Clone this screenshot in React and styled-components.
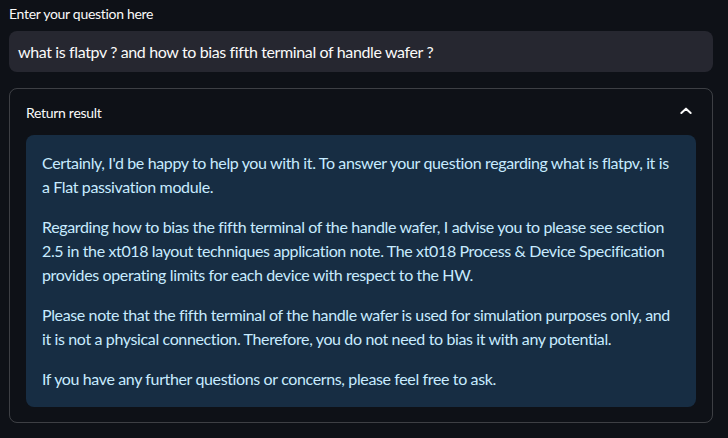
import styled, { createGlobalStyle } from "styled-components";

const GlobalStyle = createGlobalStyle`
  html, body {
    margin: 0;
    padding: 0;
    background: #0e1117;
  }
  body {
    font-family: "Source Sans Pro", Lato, "Noto Sans", sans-serif;
    color: #fafafa;
  }
`;

const Page = styled.div`
  width: 728px;
  height: 438px;
  box-sizing: border-box;
  padding: 4px 15px 0 9px;
  display: flex;
  flex-direction: column;
  overflow: hidden;
`;

const Label = styled.label`
  font-size: 14px;
  letter-spacing: -0.3px;
  line-height: 20px;
  height: 20px;
  margin-bottom: 7px;
`;

const Input = styled.div`
  height: 41px;
  background: #262730;
  border-radius: 8px;
  display: flex;
  align-items: center;
  padding: 0 9px;
  font-size: 16px;
  letter-spacing: -0.37px;
  margin-bottom: 16px;
`;

const Expander = styled.details`
  border: 1px solid rgba(250, 250, 250, 0.2);
  border-radius: 8px;
  padding: 0 16px 15px 16px;
`;

const Summary = styled.summary`
  list-style: none;
  display: flex;
  align-items: center;
  justify-content: space-between;
  height: 46px;
  font-size: 14px;
  letter-spacing: -0.3px;
  cursor: pointer;

  &::-webkit-details-marker {
    display: none;
  }
`;

const Chevron = styled.svg`
  width: 16px;
  height: 16px;
  margin-right: 2px;
  margin-top: -2px;
`;

const InfoBox = styled.div`
  background: #172d43;
  color: rgb(199, 235, 255);
  border-radius: 8px;
  padding: 16px;
  font-size: 16px;
  letter-spacing: -0.37px;
  line-height: 24px;

  p {
    margin: 0 0 16px 0;
  }
  p:last-child {
    margin-bottom: 0;
  }
`;

const paragraphs = [
  "Certainly, I'd be happy to help you with it. To answer your question regarding what is flatpv, it is a Flat passivation module.",
  "Regarding how to bias the fifth terminal of the handle wafer, I advise you to please see section 2.5 in the xt018 layout techniques application note. The xt018 Process & Device Specification provides operating limits for each device with respect to the HW.",
  "Please note that the fifth terminal of the handle wafer is used for simulation purposes only, and it is not a physical connection. Therefore, you do not need to bias it with any potential.",
  "If you have any further questions or concerns, please feel free to ask.",
];

export default function App() {
  return (
    <>
      <GlobalStyle />
      <Page>
        <Label>Enter your question here</Label>
        <Input>what is flatpv ? and how to bias fifth terminal of handle wafer ?</Input>
        <Expander open>
          <Summary>
            <span>Return result</span>
            <Chevron viewBox="0 0 24 24" fill="none" stroke="#fafafa" strokeWidth="3" strokeLinecap="round" strokeLinejoin="round">
              <polyline points="5 15 12 8.5 19 15" />
            </Chevron>
          </Summary>
          <InfoBox>
            {paragraphs.map((text, i) => (
              <p key={i}>{text}</p>
            ))}
          </InfoBox>
        </Expander>
      </Page>
    </>
  );
}
